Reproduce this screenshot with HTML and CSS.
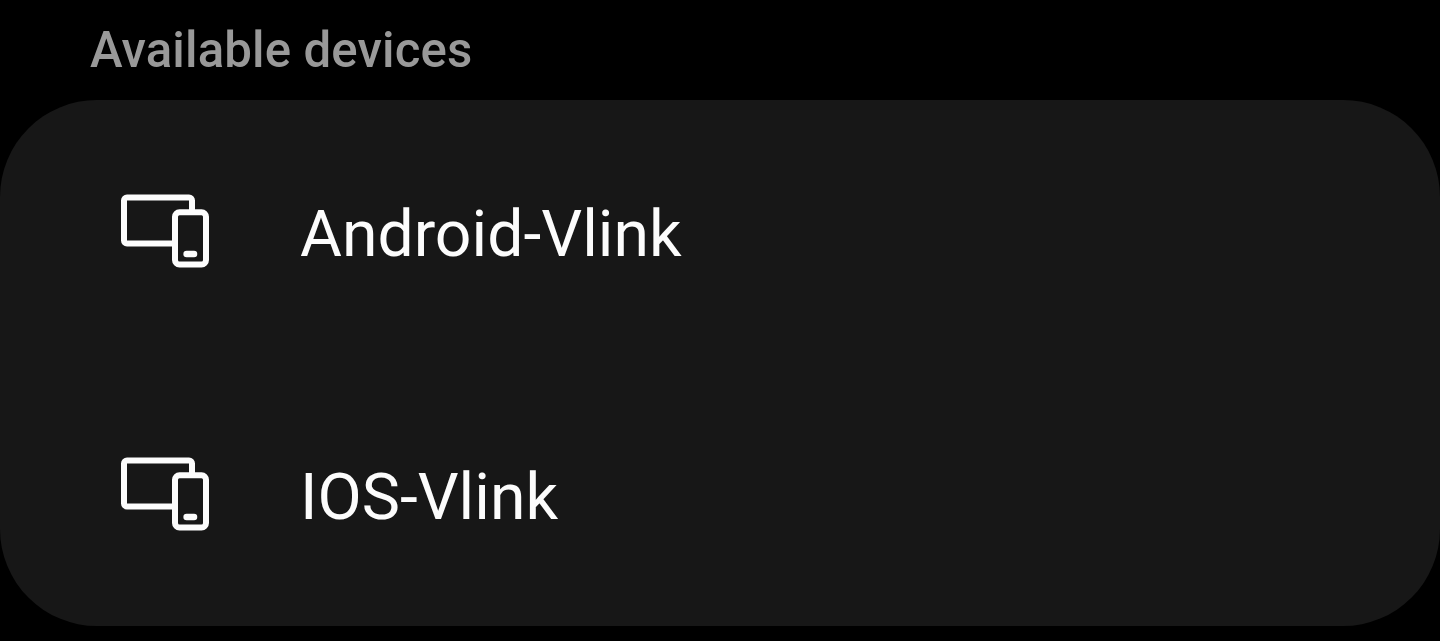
FILE: index.html
```
<!DOCTYPE html>
<html lang="en">
<head>
<meta charset="UTF-8" />
<meta name="viewport" content="width=device-width, initial-scale=1" />
<title>Available devices</title>
<link rel="stylesheet" href="styles.css">
</head>
<body>
<h2 class="section-title">Available devices</h2>

<ul class="device-list">
  <li class="device">
    <svg class="device-icon" viewBox="0 0 90 77" aria-hidden="true">
      <path d="M54 50.500H7a3 3 0 0 1-3-3V7.500a3 3 0 0 1 3-3H69a3 3 0 0 1 3 3V18" />
      <rect x="55" y="19.200" width="31" height="52.300" rx="4.500" />
      <path class="home-bar" d="M66.600 61H74" />
    </svg>
    <span class="device-name">Android-Vlink</span>
  </li>
  <li class="device">
    <svg class="device-icon" viewBox="0 0 90 77" aria-hidden="true">
      <path d="M54 50.500H7a3 3 0 0 1-3-3V7.500a3 3 0 0 1 3-3H69a3 3 0 0 1 3 3V18" />
      <rect x="55" y="19.200" width="31" height="52.300" rx="4.500" />
      <path class="home-bar" d="M66.600 61H74" />
    </svg>
    <span class="device-name">IOS-Vlink</span>
  </li>
</ul>
</body>
</html>
```

FILE: styles.css
```
* { box-sizing: border-box; }
body { margin: 0; background: #000; color: #fcfcfc; font-family: Roboto, sans-serif; overflow: hidden; }
.section-title { height: 100px; margin: 0; padding: 20px 0 0 90px; font-size: 49.2px; line-height: 60px; letter-spacing: 0.12px; font-weight: 500; color: #999; }
.device-list { height: 526px; margin: 0; padding: 0; list-style: none; background: #171717; border-radius: 97px; }
.device { display: flex; align-items: center; height: 263px; padding-left: 120px; }
.device-icon { width: 90px; height: 77px; fill: none; stroke: #fcfcfc; stroke-width: 6; }
.home-bar { stroke-width: 6.5; stroke-linecap: round; }
.device-name { margin-left: 90px; padding-top: 4px; font-size: 64.3px; line-height: 76px; }
```
